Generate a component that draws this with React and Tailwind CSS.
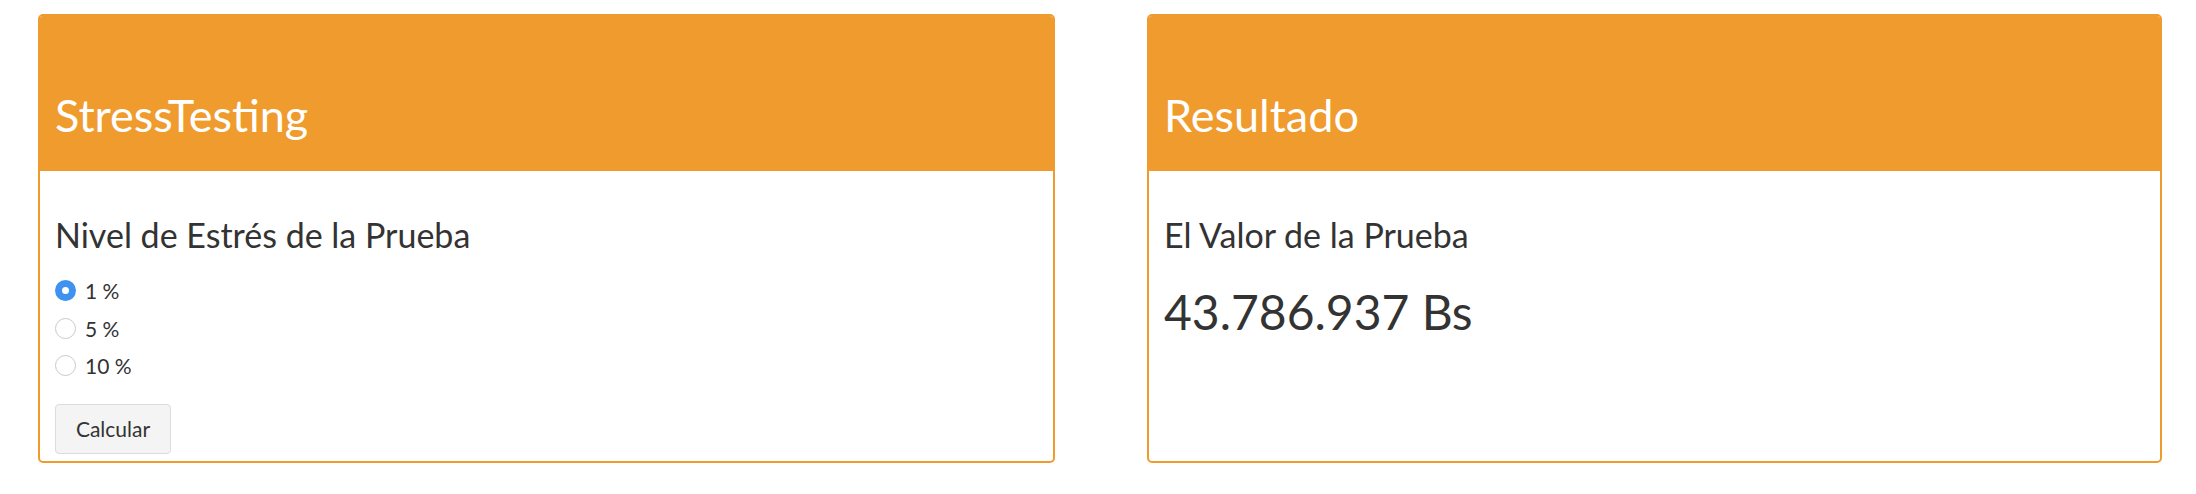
import React, { useState } from 'react';

const OPTIONS = ['1 %', '5 %', '10 %'];

const Panel = ({ title, width, children }) => (
  <div className={`${width} h-[449px] flex flex-col rounded-[5px] border-2 border-[#f09b2e] bg-white overflow-hidden`}>
    <div className="h-[155px] shrink-0 bg-[#f09b2e] px-[15px] pt-[77px]">
      <h3 className="text-[45px] leading-none font-normal text-white">{title}</h3>
    </div>
    <div className="flex-1 px-[15px] pt-[47px]">{children}</div>
  </div>
);

const Radio = ({ checked }) =>
  checked ? (
    <span className="w-[21px] h-[21px] rounded-full bg-[#3f92f0] flex items-center justify-center">
      <span className="w-[7px] h-[7px] rounded-full bg-white" />
    </span>
  ) : (
    <span className="w-[21px] h-[21px] rounded-full border border-[#c9c9c9] bg-white" />
  );

export default function App() {
  const [level, setLevel] = useState(0);

  return (
    <div className="w-[2196px] h-[494px] bg-white flex gap-[92px] pt-[14px] pl-[38px] font-['Lato',sans-serif] text-[#333]">
      <Panel title="StressTesting" width="w-[1017px]">
        <h4 className="text-[34px] leading-none font-normal">Nivel de Estrés de la Prueba</h4>
        <div className="mt-[20px] flex flex-col">
          {OPTIONS.map((opt, i) => (
            <label
              key={opt}
              onClick={() => setLevel(i)}
              className="h-[37.5px] flex items-center gap-[9px] cursor-pointer"
            >
              <Radio checked={level === i} />
              <span className="text-[21px] leading-none">{opt}</span>
            </label>
          ))}
        </div>
        <button className="mt-[19px] w-[116px] h-[50px] rounded-[4px] border border-[#dcdcdc] bg-[#f4f4f4] text-[21px] text-[#333]">
          Calcular
        </button>
      </Panel>

      <Panel title="Resultado" width="w-[1015px]">
        <h4 className="text-[34px] leading-none font-normal">El Valor de la Prueba</h4>
        <div className="mt-[36px] text-[48px] leading-none">43.786.937 Bs</div>
      </Panel>
    </div>
  );
}
